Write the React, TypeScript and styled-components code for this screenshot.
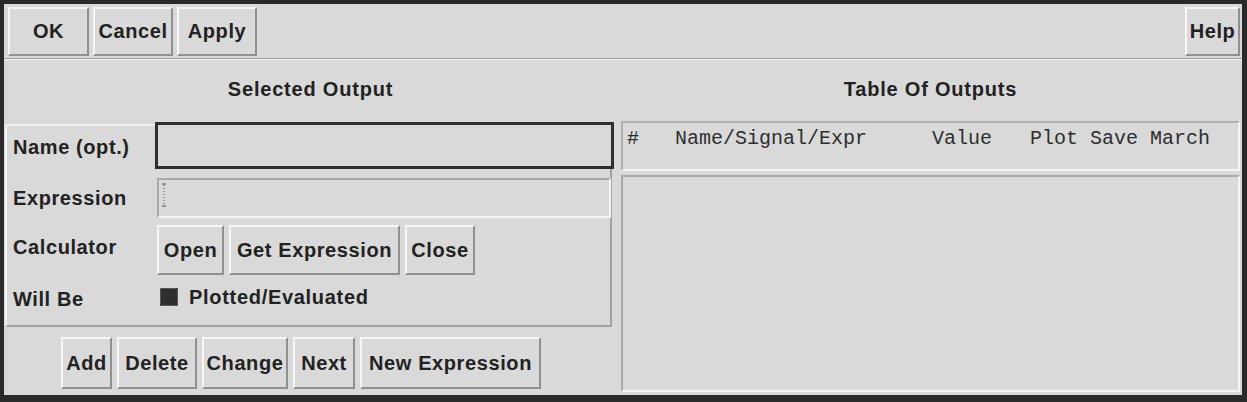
import styled, { createGlobalStyle } from "styled-components";

const GlobalStyle = createGlobalStyle`
    html, body {
        margin: 0;
        padding: 0;
        background: #2a2a2a;
    }
    body {
        font-family: "Liberation Sans", Arial, sans-serif;
    }
`;

const toolbarButtons = [
    { label: "OK", w: 81 },
    { label: "Cancel", w: 80 },
    { label: "Apply", w: 80 },
];

const calcButtons = [
    { label: "Open", w: 67 },
    { label: "Get Expression", w: 171 },
    { label: "Close", w: 70 },
];

const actionButtons = [
    { label: "Add", w: 51 },
    { label: "Delete", w: 80 },
    { label: "Change", w: 86 },
    { label: "Next", w: 62 },
    { label: "New Expression", w: 181 },
];

// column widths of the outputs table header
const columns = [
    { label: "#", w: 48 },
    { label: "Name/Signal/Expr", w: 257 },
    { label: "Value", w: 98 },
    { label: "Plot Save March", w: 0 },
];

const App = () => {
    return (
        <>
            <GlobalStyle />
            <Window>
                <Toolbar>
                    {toolbarButtons.map((b) => (
                        <Button key={b.label} $w={b.w} $h={49}>
                            {b.label}
                        </Button>
                    ))}
                    <HelpButton $w={55} $h={49}>
                        Help
                    </HelpButton>
                </Toolbar>
                <Main>
                    <LeftColumn>
                        <Title>Selected Output</Title>
                        <Frame>
                            <FieldRow $h={43}>
                                <Label>Name (opt.)</Label>
                                <NameInput />
                            </FieldRow>
                            <FieldRow $h={40} $mt={9}>
                                <Label>Expression</Label>
                                <ExprInput>
                                    {/* dotted text cursor */}
                                    <svg width="6" height="24" viewBox="0 0 6 24">
                                        <line x1="1" y1="1" x2="5" y2="1" stroke="#555" strokeWidth="1" />
                                        <line
                                            x1="3"
                                            y1="2"
                                            x2="3"
                                            y2="22"
                                            stroke="#555"
                                            strokeWidth="1"
                                            strokeDasharray="1 2"
                                        />
                                        <line x1="1" y1="23" x2="5" y2="23" stroke="#555" strokeWidth="1" />
                                    </svg>
                                </ExprInput>
                            </FieldRow>
                            <FieldRow $h={50} $mt={7}>
                                <Label $shift={-3}>Calculator</Label>
                                <ButtonRow>
                                    {calcButtons.map((b) => (
                                        <Button key={b.label} $w={b.w} $h={50}>
                                            {b.label}
                                        </Button>
                                    ))}
                                </ButtonRow>
                            </FieldRow>
                            <FieldRow $h={44}>
                                <Label $shift={2}>Will Be</Label>
                                <Toggle>
                                    <ToggleBox />
                                    Plotted/Evaluated
                                </Toggle>
                            </FieldRow>
                        </Frame>
                        <ActionBar>
                            {actionButtons.map((b) => (
                                <Button key={b.label} $w={b.w} $h={52}>
                                    {b.label}
                                </Button>
                            ))}
                        </ActionBar>
                    </LeftColumn>
                    <RightColumn>
                        <Title>Table Of Outputs</Title>
                        <TableHeader>
                            {columns.map((c) => (
                                <HeaderCell key={c.label} $w={c.w}>
                                    {c.label}
                                </HeaderCell>
                            ))}
                        </TableHeader>
                        <TableBody />
                    </RightColumn>
                </Main>
            </Window>
        </>
    );
};

const Window = styled.div`
    box-sizing: border-box;
    width: 1247px;
    height: 402px;
    border-style: solid;
    border-color: #2a2a2a;
    border-width: 4px 5px 7px 4px;
    background: #d9d9d9;
    display: flex;
    flex-direction: column;
    color: #222;
`;

const Toolbar = styled.div`
    box-sizing: border-box;
    height: 55px;
    display: flex;
    align-items: flex-start;
    gap: 4px;
    padding: 3px 2px 0 4px;
    border-bottom: 1px solid #9c9c9c;
    box-shadow: 0 1px 0 #f2f2f2;
`;

const Button = styled.button<{ $w: number; $h: number }>`
    box-sizing: border-box;
    width: ${(p) => p.$w}px;
    height: ${(p) => p.$h}px;
    flex-shrink: 0;
    padding: 0;
    white-space: nowrap;
    font-family: "Liberation Sans", Arial, sans-serif;
    font-weight: bold;
    font-size: 20px;
    letter-spacing: 0.6px;
    color: #222;
    background: #d9d9d9;
    border: 2px solid;
    border-color: #f6f6f6 #8f8f8f #8f8f8f #f6f6f6;
`;

const HelpButton = styled(Button)`
    margin-left: auto;
`;

const Main = styled.div`
    flex: 1;
    display: flex;
    min-height: 0;
`;

const LeftColumn = styled.div`
    width: 613px;
    flex-shrink: 0;
    display: flex;
    flex-direction: column;
`;

const RightColumn = styled.div`
    flex: 1;
    display: flex;
    flex-direction: column;
    padding: 0 2px 3px 4px;
`;

const Title = styled.div`
    height: 62px;
    display: flex;
    align-items: center;
    justify-content: center;
    padding-bottom: 2px;
    box-sizing: border-box;
    font-weight: bold;
    font-size: 20px;
    letter-spacing: 0.8px;
`;

const Frame = styled.div`
    margin: 3px 5px 0 1px;
    border: 2px solid;
    border-color: #f0f0f0 #a2a2a2 #a2a2a2 #f0f0f0;
    padding: 0 0 6px 6px;
    display: flex;
    flex-direction: column;
`;

const FieldRow = styled.div<{ $h: number; $mt?: number }>`
    height: ${(p) => p.$h}px;
    margin-top: ${(p) => p.$mt ?? 0}px;
    display: flex;
    align-items: center;
`;

const Label = styled.div<{ $shift?: number }>`
    width: 144px;
    flex-shrink: 0;
    font-weight: bold;
    font-size: 20px;
    letter-spacing: 0.6px;
    white-space: nowrap;
    position: relative;
    top: ${(p) => p.$shift ?? 0}px;
`;

const NameInput = styled.div`
    box-sizing: border-box;
    flex: 1;
    align-self: flex-start;
    height: 47px;
    margin: -4px -4px 0 -2px;
    border: 3px solid #2f2f2f;
    background: #d9d9d9;
`;

const ExprInput = styled.div`
    box-sizing: border-box;
    flex: 1;
    height: 40px;
    margin-right: -1px;
    border: 2px solid;
    border-color: #a9a9a9 #f4f4f4 #f4f4f4 #a9a9a9;
    display: flex;
    align-items: flex-start;
    padding: 3px 0 0 2px;
`;

const ButtonRow = styled.div`
    display: flex;
    gap: 5px;
`;

const Toggle = styled.div`
    display: flex;
    align-items: center;
    gap: 11px;
    padding-left: 3px;
    font-weight: bold;
    font-size: 20px;
    letter-spacing: 0.7px;
`;

const ToggleBox = styled.span`
    box-sizing: border-box;
    width: 18px;
    height: 18px;
    background: #2e2e2e;
    border: 1px solid #555;
`;

const ActionBar = styled.div`
    display: flex;
    gap: 5px;
    margin-top: 10px;
    padding-left: 57px;
`;

const TableHeader = styled.div`
    box-sizing: border-box;
    height: 50px;
    border: 2px solid;
    border-color: #b2b2b2 #f4f4f4 #f4f4f4 #b2b2b2;
    display: flex;
    align-items: flex-start;
    padding: 5px 0 0 4px;
    font-family: "Liberation Mono", "Courier New", monospace;
    font-size: 20px;
    line-height: 22px;
    color: #2e2e2e;
`;

const HeaderCell = styled.span<{ $w: number }>`
    flex: ${(p) => (p.$w ? `0 0 ${p.$w}px` : "1")};
    white-space: pre;
`;

const TableBody = styled.div`
    flex: 1;
    margin-top: 4px;
    border: 2px solid;
    border-color: #a8a8a8 #f4f4f4 #f4f4f4 #a8a8a8;
`;

export default App;
